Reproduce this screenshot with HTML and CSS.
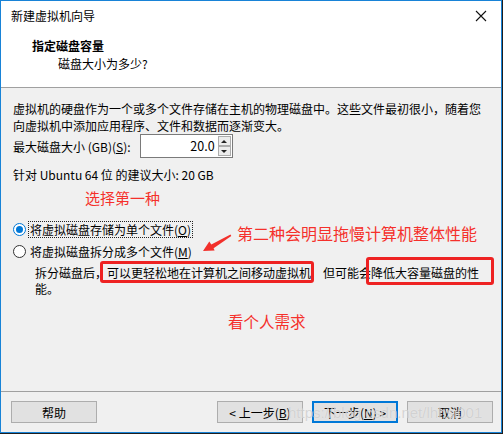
FILE: index.html
```html
<!DOCTYPE html>
<html lang="zh-CN">
<head>
  <meta charset="UTF-8" />
  <title>新建虚拟机向导</title>
  <link rel="stylesheet" href="styles.css">
</head>
<body>
  <div class="window">
    <div class="titlebar">
      <span class="title">新建虚拟机向导</span>
      <svg class="close" width="12" height="12" viewBox="0 0 12 12">
        <path d="M1 1 L11 11 M11 1 L1 11" stroke="#111" stroke-width="1.1" fill="none"/>
      </svg>
    </div>

    <div class="header">
      <div class="header-title">指定磁盘容量</div>
      <div class="header-sub">磁盘大小为多少?</div>
    </div>

    <div class="content">
      <p class="intro">虚拟机的硬盘作为一个或多个文件存储在主机的物理磁盘中。这些文件最初很小，随着您向虚拟机中添加应用程序、文件和数据而逐渐变大。</p>

      <div class="size-row">
        <label>最大磁盘大小 (GB)(<u>S</u>):</label>
        <div class="spin">
          <div class="spin-value">20.0</div>
          <div class="spin-btns">
            <span class="spin-btn"><i class="tri-up"></i></span>
            <span class="spin-btn"><i class="tri-down"></i></span>
          </div>
        </div>
      </div>

      <div class="recommend">针对 Ubuntu 64 位 的建议大小: 20 GB</div>

      <div class="note note-first">选择第一种</div>

      <div class="radio-row">
        <span class="radio checked"></span>
        <span class="radio-label focused">将虚拟磁盘存储为单个文件(<u>O</u>)</span>
      </div>
      <div class="radio-row">
        <span class="radio"></span>
        <span class="radio-label">将虚拟磁盘拆分成多个文件(<u>M</u>)</span>
      </div>

      <p class="split-desc">拆分磁盘后，可以更轻松地在计算机之间移动虚拟机<span class="hidden-comma">，</span>但可能会降低大容量磁盘的性能。</p>

      <div class="note note-need">看个人需求</div>
    </div>

    <div class="footer">
      <button class="btn">帮助</button>
      <div class="footer-right">
        <button class="btn">&lt; 上一步(<u>B</u>)</button>
        <button class="btn btn-default">下一步(<u>N</u>) &gt;</button>
        <button class="btn">取消</button>
      </div>
    </div>

    <!-- annotations drawn over the dialog -->
    <div class="note note-second">第二种会明显拖慢计算机整体性能</div>
    <svg class="arrow" width="501" height="432" viewBox="0 0 501 432">
      <polygon fill="#f2302b" points="202,250 208.3,240.6 210.3,243.6 229.5,233.6 230.3,235 212.6,247.2 213.6,249.6"/>
    </svg>
    <div class="mark mark-one"></div>
    <div class="mark mark-two"></div>
    <div class="watermark">https://blog.csdn.net/lhhsi001</div>
  </div>
</body>
</html>
```

FILE: styles.css
```css
* {
  box-sizing: border-box;
}

body {
  margin: 0;
  background: #1e1e1e;
  font-family: "Noto Sans CJK SC", "Noto Sans", sans-serif;
  font-size: 12px;
  color: #000;
}

.window {
  position: relative;
  width: 502px;
  height: 433px;
  border: 1px solid #1883d7;
  background: #f0f0f0;
  display: flex;
  flex-direction: column;
  overflow: hidden;
}

.titlebar {
  height: 30px;
  background: #fff;
  display: flex;
  align-items: center;
  justify-content: space-between;
  padding: 0 14px 0 10px;
}

.title {
  line-height: 16px;
}

.header {
  height: 57px;
  background: #fff;
  border-bottom: 1px solid #a0a0a0;
  padding: 6px 0 0 31px;
}

.header-title {
  font-weight: bold;
  line-height: 18px;
}

.header-sub {
  line-height: 18px;
  padding-left: 26px;
}

.content {
  flex: 1;
  padding: 12px 12px 0 12px;
}

.intro {
  margin: 0;
  line-height: 17px;
}

.size-row {
  display: flex;
  align-items: center;
  gap: 9px;
}

.spin {
  display: flex;
  width: 93px;
  height: 24px;
  border: 1px solid #7a7a7a;
  background: #fff;
}

.spin-value {
  flex: 1;
  text-align: right;
  padding-right: 3px;
  line-height: 21px;
  font-size: 12.5px;
}

.spin-btns {
  width: 14px;
  display: flex;
  flex-direction: column;
  padding: 1px 0;
}

.spin-btn {
  flex: 1;
  display: flex;
  align-items: center;
  justify-content: center;
  border: 1px solid #acacac;
  background: #ececec;
  margin-right: 1px;
}

.tri-up,
.tri-down {
  width: 0;
  height: 0;
  border-left: 3px solid transparent;
  border-right: 3px solid transparent;
}

.tri-up {
  border-bottom: 3px solid #222;
}

.tri-down {
  border-top: 3px solid #222;
}

.recommend {
  margin-top: 8px;
  line-height: 17px;
}

.note {
  color: #f5302b;
  font-size: 15px;
  line-height: 20px;
}

.note-first {
  margin-top: 5px;
  margin-left: 72px;
}

.radio-row {
  display: flex;
  align-items: center;
  height: 22px;
}

.note-first + .radio-row {
  margin-top: 10px;
}

.radio {
  width: 13px;
  height: 13px;
  border: 1px solid #333;
  border-radius: 50%;
  background: #fff;
  margin-right: 3px;
  display: flex;
  align-items: center;
  justify-content: center;
}

.radio.checked {
  border-color: #0078d7;
}

.radio.checked::after {
  content: "";
  width: 7px;
  height: 7px;
  border-radius: 50%;
  background: #0078d7;
}

.radio-label {
  padding: 0 1px;
  line-height: 15px;
}

.radio-label.focused {
  outline: 1px dotted #222;
}

.split-desc {
  margin: 3px 0 0 22px;
  line-height: 16px;
  width: 450px;
}

.hidden-comma {
  color: #f0f0f0;
}

.note-need {
  margin-top: 14px;
  margin-left: 215px;
  font-size: 15.5px;
}

.footer {
  height: 41px;
  border-top: 1px solid #a0a0a0;
  display: flex;
  justify-content: space-between;
  padding: 9px 8px 0 10px;
}

.footer-right {
  display: flex;
  gap: 9px;
}

.btn {
  width: 86px;
  height: 22px;
  padding: 0;
  border: 1px solid #adadad;
  background: #e1e1e1;
  font-family: inherit;
  font-size: 12px;
  color: #000;
}

.btn-default {
  border: 2px solid #0078d7;
}

.note-second {
  position: absolute;
  left: 236px;
  top: 222px;
  font-size: 16px;
}

.arrow {
  position: absolute;
  left: 0;
  top: 0;
  pointer-events: none;
}

.mark {
  position: absolute;
  border: 3px solid #ee2222;
  border-radius: 3px;
}

.mark-one {
  left: 99px;
  top: 260px;
  width: 214px;
  height: 22px;
}

.mark-two {
  left: 365px;
  top: 256px;
  width: 128px;
  height: 28px;
}

.watermark {
  position: absolute;
  left: 287px;
  top: 403px;
  font-family: "Liberation Sans", Arial, sans-serif;
  font-size: 15px;
  color: rgba(200, 200, 200, 0.75);
  text-shadow: 0 0 1px rgba(255, 255, 255, 0.6);
  pointer-events: none;
}
```
